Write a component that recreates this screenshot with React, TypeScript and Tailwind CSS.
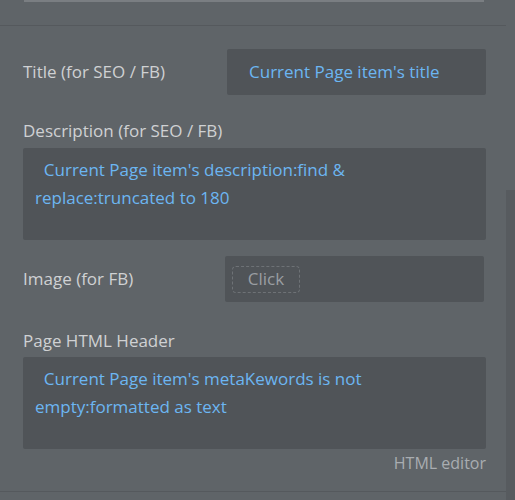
export default function App() {
  const f = { fontFamily: '"Open Sans", sans-serif' };
  return (
    <div className="relative w-[515px] h-[500px] bg-[#5f6468] overflow-hidden text-[17px]" style={f}>
      <div className="absolute left-[24px] top-0 w-[460px] h-[2px] bg-[#7a7e82]" />
      <div className="absolute left-0 top-[25px] w-[506px] h-px bg-[#55595d]" />
      <div className="absolute right-0 top-[190px] w-[9px] h-[310px] bg-[#575b5f]" />
      <div className="absolute left-0 top-[491px] w-[506px] h-px bg-[#55595d]" />
      <div className="absolute left-[23px] top-[49px] w-[463px]">
        <div className="flex items-center justify-between h-[46px]">
          <span className="text-[#cfd1d3]">Title (for SEO / FB)</span>
          <div className="w-[259px] h-[46px] bg-[#505458] rounded-[2px] flex items-center pl-[22px] text-[#6cb6f2]">Current Page item's title</div>
        </div>
        <div className="mt-[24px] text-[#cfd1d3] leading-[24px]">Description (for SEO / FB)</div>
        <div className="mt-[5px] h-[92px] bg-[#505458] rounded-[2px] pl-[12px] pr-[10px] pt-[8px] text-[#6cb6f2] leading-[28px]">
          &nbsp;&nbsp;Current Page item's description:find &amp; replace:truncated to 180
        </div>
        <div className="mt-[16px] flex items-center justify-between h-[46px] pr-[2px]">
          <span className="text-[#cfd1d3]">Image (for FB)</span>
          <div className="w-[259px] h-[46px] bg-[#505458] rounded-[2px] flex items-center pl-[7px]">
            <div className="w-[68px] h-[27px] border border-dashed border-[#6e7276] rounded-[4px] flex items-center justify-center text-[#9a9ea2]">Click</div>
          </div>
        </div>
        <div className="mt-[27px] text-[#cfd1d3] leading-[24px]">Page HTML Header</div>
        <div className="mt-[4px] h-[92px] bg-[#505458] rounded-[2px] pl-[12px] pr-[10px] pt-[8px] text-[#6cb6f2] leading-[28px]">
          &nbsp;&nbsp;Current Page item's metaKewords is not empty:formatted as text
        </div>
        <div className="mt-[2px] text-right text-[#a9adb1] text-[16px] leading-[24px]">HTML editor</div>
      </div>
    </div>
  );
}
